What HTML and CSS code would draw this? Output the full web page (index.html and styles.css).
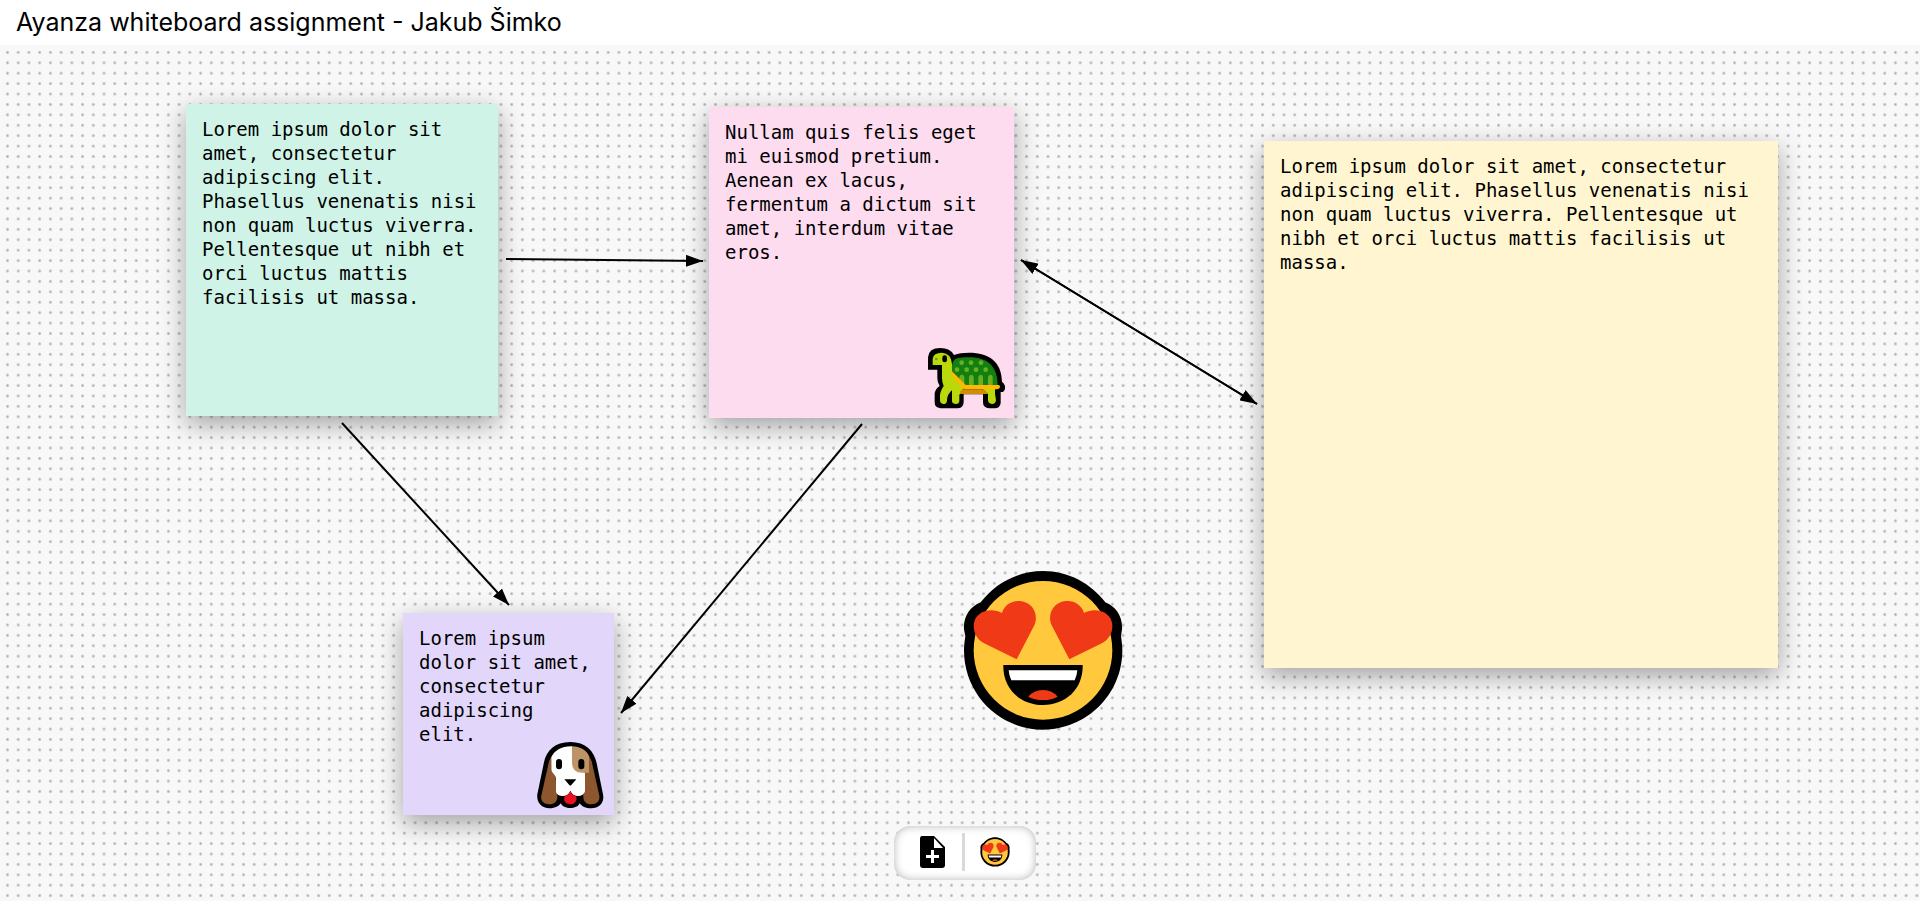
FILE: index.html
```html
<!DOCTYPE html>
<html lang="en">
<head>
<meta charset="utf-8">
<title>Ayanza whiteboard assignment - Jakub Šimko</title>
<link rel="stylesheet" href="styles.css">
</head>
<body>
<header class="header"><h1 class="title">Ayanza whiteboard assignment - Jakub Šimko</h1></header>
<main class="board">
  <svg class="layer" aria-hidden="true">
    <defs>
      <radialGradient id="dot">
        <stop offset="0" stop-color="#a8a8a8"/>
        <stop offset=".35" stop-color="#bababa"/>
        <stop offset="1" stop-color="#f8f8f8"/>
      </radialGradient>
      <pattern id="grid" x="2.1" y="2.2" width="10.727" height="10.41" patternUnits="userSpaceOnUse">
        <circle cx="5.4" cy="5.2" r="2.1" fill="url(#dot)"/>
      </pattern>
    </defs>
    <rect width="100%" height="100%" fill="url(#grid)"/>
  </svg>

  <article class="note note-green"><textarea class="note-text" aria-label="Green note" spellcheck="false">Lorem ipsum dolor sit amet, consectetur adipiscing elit. Phasellus venenatis nisi non quam luctus viverra. Pellentesque ut nibh et orci luctus mattis facilisis ut massa.</textarea></article>
  <article class="note note-pink"><textarea class="note-text" aria-label="Pink note" spellcheck="false">Nullam quis felis eget mi euismod pretium. Aenean ex lacus, fermentum a dictum sit amet, interdum vitae eros.</textarea></article>
  <article class="note note-yellow"><textarea class="note-text" aria-label="Yellow note" spellcheck="false">Lorem ipsum dolor sit amet, consectetur adipiscing elit. Phasellus venenatis nisi non quam luctus viverra. Pellentesque ut nibh et orci luctus mattis facilisis ut massa.</textarea></article>
  <article class="note note-purple"><textarea class="note-text" aria-label="Purple note" spellcheck="false">Lorem ipsum dolor sit amet, consectetur adipiscing elit.</textarea></article>

  <svg class="layer" aria-hidden="true">
    <defs>
      <marker id="head" viewBox="0 0 17 12" refX="17" refY="6" markerWidth="17" markerHeight="12" markerUnits="userSpaceOnUse" orient="auto-start-reverse"><path stroke="none" d="M0 0 17 6 0 12z"/></marker>
    </defs>
    <g stroke="#000" stroke-width="2">
      <path d="M506 214 703 216" marker-end="url(#head)"/>
      <path d="M342 378 509 560" marker-end="url(#head)"/>
      <path d="M862 379 621 668" marker-end="url(#head)"/>
      <path d="M1021 215 1257 359" marker-end="url(#head)"/>
      <path d="M1257 359 1021 215" marker-end="url(#head)"/>
    </g>
  </svg>

  <svg class="sticker turtle" viewBox="81 51 240 192" role="img" aria-label="Turtle">
    <path d="M84 119V82Q86 54 121 54Q151 54 162 75Q180 68 207 68C267 68 305 95 306 155Q317 164 315 176Q312 188 302 186V219Q300 235 284 235H268Q249 234 249 217V193H191V217Q190 235 172 235H121Q104 233 104 217V190Q106 177 119 168Q112 158 112 145V119Z"/>
    <path fill="#bad80a" d="M98 105V87Q100 68 126 68Q154 70 156 102V127L191 171L188 185L178 194V215Q176 222 168 222Q157 222 156 214V181Q141 193 141 212Q140 222 130 222Q120 221 120 211V195Q121 184 131 168Q126 157 126 143V105Z"/>
    <path fill="#bad80a" d="M249 177H285V192L288 210Q287 222 276 222Q264 221 264 210V192Z"/>
    <path fill="#128011" d="M156 123Q153 87 174 84Q190 81 207 82C263 82 293 109 293 165H194Z"/>
    <g fill="#6cae20"><circle cx="185" cy="98" r="7"/><circle cx="213" cy="98" r="7"/><circle cx="243" cy="98" r="7"/><circle cx="171" cy="119" r="7"/><circle cx="200" cy="119" r="7"/><circle cx="228" cy="119" r="7"/><circle cx="257" cy="119" r="7"/><path d="M178 149V143Q179 134 186 134Q193 135 193 142V164ZM207 165V142Q208 134 214 134Q221 135 221 142V165ZM235 165V142Q236 134 243 134Q249 135 249 142V165ZM264 165V142Q265 134 272 134Q278 135 278 142V165Z"/></g>
    <path fill="#ffb900" d="M156 123 197 165H297Q300 166 300 171Q299 177 292 178H192L157 140Z"/>
    <path fill="#d48c00" d="M187 178H252L264 192H181V184Z"/>
    <rect x="127" y="76" width="14" height="21" rx="7"/><circle cx="109" cy="87" r="4" fill="#57a51b"/>
  </svg>

  <svg class="sticker dog" viewBox="48 33 210 207" role="img" aria-label="Dog">
    <path d="M151 36C105 36 79 62 72 97L52 193C49 216 63 235 89 235C106 235 117 228 122 220C130 239 172 239 179 220C185 229 197 235 214 235C238 235 254 218 249 193L230 100C222 62 197 36 151 36Z"/>
    <path fill="#8e562e" d="M95 77 87 94 65 193C59 213 71 223 88 223C104 223 114 214 112 193L106 136 94 120ZM207 77 215 94 237 193C242 213 231 223 214 223C198 223 188 214 190 193L195 130Z"/>
    <path fill="#fff" d="M156 49C126 48 102 62 94 82V120Q96 128 103 134Q108 139 108 147V186Q112 198 128 198Q145 198 151 182Q158 198 174 198Q191 198 195 184V128L164 105Z"/>
    <path fill="#bd9467" d="M156 49C181 50 200 61 207 78V128H187Q156 128 156 98Z"/>
    <path fill="#e81123" d="M151 182Q155 196 167 197L170 207Q167 223 151 223Q133 221 132 207L135 197Q148 195 151 182Z"/>
    <path d="M133 148H169L154 165Q151 168 148 165Z"/>
    <rect x="108" y="87" width="18" height="31" rx="9"/><rect x="175" y="87" width="18" height="31" rx="9"/>
  </svg>

  <svg class="sticker face" viewBox="66 60 486 486" role="img" aria-label="Smiling face with heart eyes">
    <defs>
      <g id="heart-eyes">
        <path d="M309 63C233 63 165 100 122 157C90 169 69 202 72 238L76 259C74 274 72 286 72 301C72 433 178 539 309 539S547 433 547 301C547 286 545 274 543 259L546 238C549 202 528 169 496 157C453 100 385 63 309 63Z"/>
        <circle cx="309" cy="301" r="208" fill="#ffc83d"/>
        <path fill="#f03a17" d="M230 328 131 279C101 263 95 227 107 205C121 180 158 173 186 189C193 163 220 149 246 154C281 161 296 196 283 226Z"/>
        <path fill="#f03a17" d="M388 328 487 279C517 263 524 227 511 205C497 180 460 173 432 189C425 163 398 149 372 154C337 161 322 196 335 226Z"/>
        <path d="M190 345H428C430 416 378 465 309 465S188 416 190 345Z"/>
        <path fill="#fff" d="M206 361H412Q411 377 404 391H214Q207 377 206 361Z"/>
        <path fill="#f03a17" d="M265 440Q281 420 309 420T353 440Q335 450 309 450T265 440Z"/>
      </g>
    </defs>
    <use href="#heart-eyes"/>
  </svg>

  <nav class="toolbar" aria-label="Tools">
    <button class="tool" type="button" aria-label="Add note"><svg class="tool-icon" viewBox="0 0 32 32" aria-hidden="true"><path fill-rule="evenodd" d="M6 0H18L29 11V29Q29 32 26 32H7Q4 32 4 29V3Q4 0 6 0ZM18 2V12H27ZM15 14V19H10V22H15V27H18V22H23V19H18V14Z"/></svg></button>
    <span class="divider"></span>
    <button class="tool" type="button" aria-label="Add emoji"><svg class="tool-emoji" viewBox="66 60 486 486" aria-hidden="true"><use href="#heart-eyes"/></svg></button>
  </nav>
</main>
</body>
</html>
```
FILE: styles.css
```css
* {
  box-sizing: border-box;
}

body {
  display: flex;
  flex-direction: column;
  min-height: 100vh;
  margin: 0;
  background: #fff;
  color: #000;
  font-family: Inter, sans-serif;
}

.header {
  padding: 8px 16px;
}

.title {
  margin: 0;
  font-size: 25px;
  font-weight: 400;
  line-height: 29px;
}

.board {
  position: relative;
  flex: 1;
  overflow: hidden;
  background: #f8f8f8;
}

.layer {
  position: absolute;
  inset: 0;
  width: 100%;
  height: 100%;
  pointer-events: none;
}

.note {
  position: absolute;
  display: flex;
  padding: 13px 16px;
  box-shadow: 0 8px 24px rgba(0, 0, 0, 0.35);
}

.note-text {
  flex: 1;
  min-width: 0;
  margin: 0;
  padding: 0;
  border: 0;
  outline: 0;
  resize: none;
  overflow: hidden;
  background: transparent;
  color: #000;
  font-family: Consolas, "DejaVu Sans Mono", monospace;
  font-size: 19px;
  line-height: 24px;
}

.note-green {
  left: 186px;
  top: 59px;
  width: 312px;
  height: 312px;
  background: #cff4e7;
}

.note-pink {
  left: 709px;
  top: 62px;
  width: 305px;
  height: 311px;
  background: #fddcf0;
}

.note-yellow {
  left: 1264px;
  top: 96px;
  width: 514px;
  height: 527px;
  background: #fff6d1;
}

.note-purple {
  left: 403px;
  top: 568px;
  width: 211px;
  height: 202px;
  background: #e2d7fb;
}

.sticker {
  position: absolute;
}

.turtle {
  left: 927px;
  top: 302px;
  width: 80px;
  height: 64px;
}

.dog {
  left: 536px;
  top: 696px;
  width: 70px;
  height: 69px;
}

.face {
  left: 962px;
  top: 525px;
  width: 162px;
  height: 162px;
}

.toolbar {
  position: absolute;
  bottom: 21px;
  left: 50%;
  display: flex;
  align-items: center;
  gap: 13px;
  margin-left: -66px;
  padding: 7px 24px 9px 21px;
  border-radius: 16px;
  background: #fff;
  box-shadow: inset 0 0 8px rgba(0, 0, 0, 0.3);
}

.tool {
  display: flex;
  align-items: center;
  justify-content: center;
  width: 34px;
  height: 38px;
  padding: 0;
  border: 0;
  background: transparent;
  cursor: pointer;
}

.tool-icon {
  width: 32px;
  height: 32px;
}

.tool-emoji {
  width: 30px;
  height: 30px;
}

.divider {
  width: 3px;
  height: 38px;
  background: #d9d9d9;
}
```
